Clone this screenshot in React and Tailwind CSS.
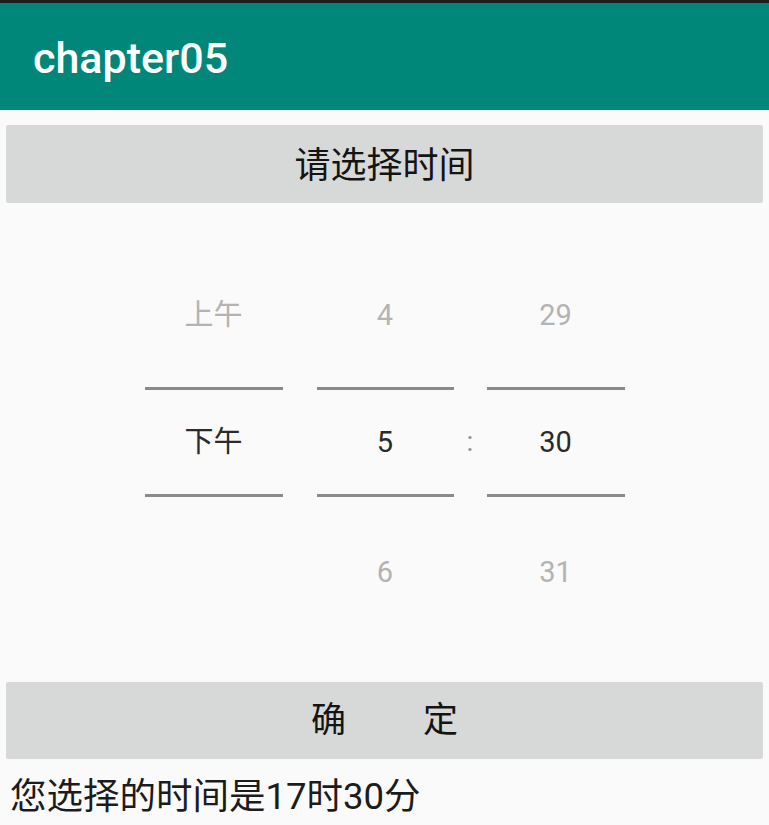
export default function App() {
  const cjk = { fontFamily: 'Roboto, "Noto Sans CJK SC", sans-serif' };
  const Col = ({ top, mid, bot, w }) => (
    <div className={`flex flex-col items-center ${w}`}>
      <div className="h-[128px] flex items-center justify-center text-[29px] text-[#b3b3b3] leading-none">{top}</div>
      <div className="mt-[8px] h-[3px] w-full bg-[#8a8a8a]" />
      <div className="h-[104px] flex items-center justify-center text-[29px] text-[#2b2b2b] leading-none">{mid}</div>
      <div className="h-[3px] w-full bg-[#8a8a8a]" />
      <div className="h-[150px] flex items-center justify-center text-[29px] text-[#b3b3b3] leading-none">{bot}</div>
    </div>
  );
  return (
    <div className="w-[769px] h-[825px] bg-[#fafafa] overflow-hidden" style={cjk}>
      <div className="h-[3px] bg-[#1e1e1e]" />
      <div className="h-[107px] bg-[#00877a] flex items-center pl-[33px] pt-[3px]">
        <span className="text-white text-[43px] font-medium leading-none" style={{ fontFamily: 'Roboto, sans-serif' }}>chapter05</span>
      </div>
      <div className="px-[6px] pt-[15px]">
        <div className="h-[78px] bg-[#d7d8d8] rounded-[2px] flex items-center justify-center pt-[3px] text-[36px] text-[#141414] leading-none">
          请选择时间
        </div>
      </div>
      <div className="h-[479px] pt-[48px] flex justify-center">
        <Col w="w-[138px]" top="上午" mid="下午" bot="" />
        <div className="w-[34px]" />
        <Col w="w-[137px]" top="4" mid="5" bot="6" />
        <div className="w-[33px] flex flex-col">
          <div className="h-[139px]" />
          <div className="h-[104px] flex items-center justify-center text-[28px] text-[#8f8f8f] leading-none">:</div>
        </div>
        <Col w="w-[138px]" top="29" mid="30" bot="31" />
      </div>
      <div className="px-[6px]">
        <div className="h-[77px] bg-[#d7d8d8] rounded-[2px] flex items-center justify-center gap-[77px] text-[35px] text-[#141414] leading-none">
          <span>确</span>
          <span>定</span>
        </div>
      </div>
      <div className="pl-[10px] pt-[20px] text-[36.5px] text-[#1c1c1c] leading-none">您选择的时间是17时30分</div>
    </div>
  );
}
